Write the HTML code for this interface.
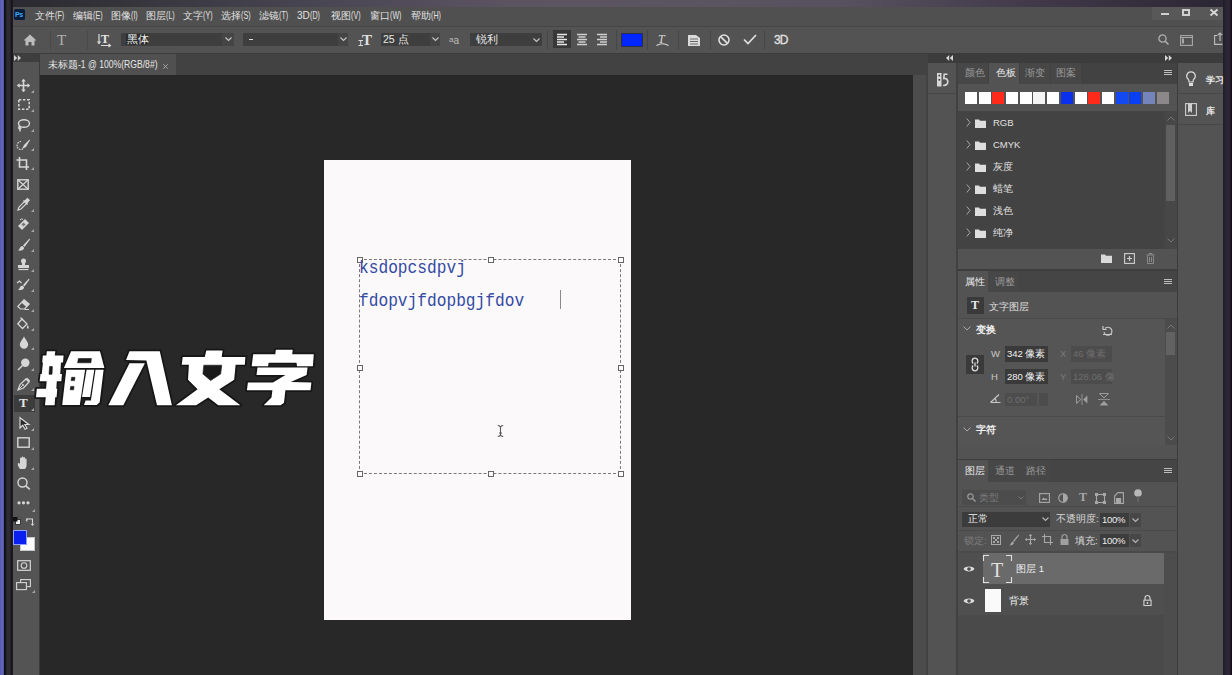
<!DOCTYPE html>
<html><head><meta charset="utf-8">
<style>
*{margin:0;padding:0;box-sizing:border-box}
html,body{width:1232px;height:675px;overflow:hidden;background:#2a2630}
body{position:relative;font-family:"Liberation Sans",sans-serif;color:#e0e0e0}
.a{position:absolute}
.t{position:absolute;white-space:nowrap}
svg{position:absolute;overflow:visible}
</style></head><body>

<div class="a" style="left:0px;top:0px;width:1232px;height:7px;background:linear-gradient(90deg,#2a2830 0%,#333238 8%,#484552 25%,#5d5462 42%,#5a5560 58%,#575160 68%,#403848 85%,#2a2533 100%);"></div>
<div class="a" style="left:0px;top:0px;width:4px;height:675px;background:linear-gradient(90deg,#5558ba,#6467b6 60%,#4f5090);"></div>
<div class="a" style="left:4px;top:0px;width:9px;height:675px;background:linear-gradient(90deg,#040818 0%,#0e121c 12%,#2e2c30 35%,#302b32 65%,#1a1520 80%,#161318 92%,#2a2a2a 100%);"></div>
<div class="a" style="left:1223px;top:0px;width:9px;height:675px;background:linear-gradient(90deg,#201c24,#2a2532 35%,#2e2836 70%,#100810 100%);"></div>
<div class="a" style="left:13px;top:7px;width:1210px;height:19px;background:#505050;"></div>
<div class="a" style="left:14px;top:9px;width:11px;height:11px;background:#0b1d3d;border-radius:1.5px"></div>
<div class="t" style="left:15px;top:9px;font-size:7px;line-height:8.4px;color:#3ea8f8;font-weight:bold;line-height:11px;letter-spacing:-0.3px">Ps</div>
<div class="t" style="left:35px;top:9px;font-size:10px;line-height:13px;color:#e2e2e2">文件<span style="display:inline-block;font-size:10.5px;transform:scaleX(0.68);transform-origin:0 0">(F)</span></div>
<div class="t" style="left:73px;top:9px;font-size:10px;line-height:13px;color:#e2e2e2">编辑<span style="display:inline-block;font-size:10.5px;transform:scaleX(0.68);transform-origin:0 0">(E)</span></div>
<div class="t" style="left:111px;top:9px;font-size:10px;line-height:13px;color:#e2e2e2">图像<span style="display:inline-block;font-size:10.5px;transform:scaleX(0.68);transform-origin:0 0">(I)</span></div>
<div class="t" style="left:146px;top:9px;font-size:10px;line-height:13px;color:#e2e2e2">图层<span style="display:inline-block;font-size:10.5px;transform:scaleX(0.68);transform-origin:0 0">(L)</span></div>
<div class="t" style="left:183px;top:9px;font-size:10px;line-height:13px;color:#e2e2e2">文字<span style="display:inline-block;font-size:10.5px;transform:scaleX(0.68);transform-origin:0 0">(Y)</span></div>
<div class="t" style="left:221px;top:9px;font-size:10px;line-height:13px;color:#e2e2e2">选择<span style="display:inline-block;font-size:10.5px;transform:scaleX(0.68);transform-origin:0 0">(S)</span></div>
<div class="t" style="left:259px;top:9px;font-size:10px;line-height:13px;color:#e2e2e2">滤镜<span style="display:inline-block;font-size:10.5px;transform:scaleX(0.68);transform-origin:0 0">(T)</span></div>
<div class="t" style="left:297px;top:9px;font-size:10px;line-height:13px;color:#e2e2e2">3D<span style="display:inline-block;font-size:10.5px;transform:scaleX(0.68);transform-origin:0 0">(D)</span></div>
<div class="t" style="left:331px;top:9px;font-size:10px;line-height:13px;color:#e2e2e2">视图<span style="display:inline-block;font-size:10.5px;transform:scaleX(0.68);transform-origin:0 0">(V)</span></div>
<div class="t" style="left:370px;top:9px;font-size:10px;line-height:13px;color:#e2e2e2">窗口<span style="display:inline-block;font-size:10.5px;transform:scaleX(0.68);transform-origin:0 0">(W)</span></div>
<div class="t" style="left:411px;top:9px;font-size:10px;line-height:13px;color:#e2e2e2">帮助<span style="display:inline-block;font-size:10.5px;transform:scaleX(0.68);transform-origin:0 0">(H)</span></div>
<div class="a" style="left:1152px;top:7px;width:71px;height:13px;background:#585858;"></div>
<div class="a" style="left:1161px;top:13px;width:8px;height:2px;background:#d0d0d0;"></div>
<div class="a" style="left:1182px;top:9px;width:8px;height:7px;background:transparent;border:2px solid #d0d0d0"></div>
<svg style="left:1210px;top:9px;" width="8" height="7" viewBox="0 0 8 7"><path d="M0.5 0.5L7.5 6.5M7.5 0.5L0.5 6.5" stroke="#d8d8d8" stroke-width="1.8"/></svg>
<div class="a" style="left:13px;top:26px;width:1210px;height:27px;background:#535353;border-top:1px solid #474747"></div>
<div class="a" style="left:13px;top:53px;width:1210px;height:1px;background:#3c3c3c;"></div>
<svg style="left:23px;top:34px;" width="14" height="12" viewBox="0 0 14 12"><path d="M7 0.5L0.5 6.5H2.5V11.5H5.5V8H8.5V11.5H11.5V6.5H13.5Z" fill="#bdbdbd"/></svg>
<div class="a" style="left:50px;top:30px;width:1px;height:20px;background:#4a4a4a;"></div>
<div class="t" style="left:57px;top:32px;font-size:15px;line-height:18.0px;color:#b0b0b0;font-family:'Liberation Serif',serif;line-height:17px">T</div>
<div class="a" style="left:87px;top:30px;width:1px;height:20px;background:#4a4a4a;"></div>
<svg style="left:97px;top:33px;" width="15" height="14" viewBox="0 0 15 14"><path d="M2 1V10M0.5 8.5L2 10.5L3.5 8.5" stroke="#dadada" stroke-width="1.2" fill="none"/><text x="4" y="10" font-family="Liberation Serif" font-weight="bold" font-size="12" fill="#e6e6e6">T</text><path d="M4 12.5H13M11.5 11L13.5 12.5L11.5 14" stroke="#dadada" stroke-width="1.1" fill="none"/></svg>
<div class="a" style="left:121px;top:33px;width:113px;height:13px;background:#454545;"></div>
<div class="a" style="left:121px;top:33px;width:101px;height:13px;background:#3e3e3e;"></div>
<div class="a" style="left:126px;top:34px;width:21px;height:11px;background:#2c2c2c;"></div>
<div class="t" style="left:127px;top:33px;font-size:10.5px;line-height:12.6px;color:#f0f0f0;line-height:13px">黑体</div>
<svg style="left:225px;top:37px;" width="7" height="5" viewBox="0 0 7 5"><path d="M0.5 0.5L3.5 3.5L6.5 0.5" stroke="#c8c8c8" stroke-width="1.1" fill="none"/></svg>
<div class="a" style="left:243px;top:33px;width:105px;height:13px;background:#454545;"></div>
<div class="a" style="left:243px;top:33px;width:95px;height:13px;background:#3e3e3e;"></div>
<div class="a" style="left:249px;top:39px;width:4px;height:1px;background:#e0e0e0;"></div>
<svg style="left:340px;top:37px;" width="7" height="5" viewBox="0 0 7 5"><path d="M0.5 0.5L3.5 3.5L6.5 0.5" stroke="#c8c8c8" stroke-width="1.1" fill="none"/></svg>
<svg style="left:358px;top:32px;" width="15" height="15" viewBox="0 0 15 15"><text x="4" y="13" font-family="Liberation Serif" font-weight="bold" font-size="15" fill="#e0e0e0">T</text><path d="M0.5 8.5H5M0.5 13.5H5M2.7 8.5V13.5" stroke="#dcdcdc" stroke-width="1"/></svg>
<div class="a" style="left:381px;top:33px;width:59px;height:13px;background:#454545;"></div>
<div class="a" style="left:381px;top:33px;width:49px;height:13px;background:#3e3e3e;"></div>
<div class="t" style="left:383px;top:33px;font-size:10.5px;line-height:12.6px;color:#e8e8e8;line-height:13px">25 点</div>
<svg style="left:432px;top:37px;" width="7" height="5" viewBox="0 0 7 5"><path d="M0.5 0.5L3.5 3.5L6.5 0.5" stroke="#c8c8c8" stroke-width="1.1" fill="none"/></svg>
<div class="t" style="left:449px;top:33px;font-size:10px;line-height:12.0px;color:#bdbdbd;line-height:13px"><span style="font-size:8px;vertical-align:2px">a</span>a</div>
<div class="a" style="left:470px;top:33px;width:72px;height:13px;background:#3e3e3e;"></div>
<div class="t" style="left:476px;top:33px;font-size:10.5px;line-height:12.6px;color:#e8e8e8;line-height:13px">锐利</div>
<svg style="left:533px;top:38px;" width="7" height="5" viewBox="0 0 7 5"><path d="M0.5 0.5L3.5 3.5L6.5 0.5" stroke="#c8c8c8" stroke-width="1.1" fill="none"/></svg>
<div class="a" style="left:547px;top:30px;width:1px;height:20px;background:#474747;"></div>
<div class="a" style="left:553px;top:30px;width:18px;height:18px;background:#383838;"></div>
<svg style="left:556px;top:33px;" width="12" height="12" viewBox="0 0 12 12"><path d="M1 1.5H11M1 4H8M1 6.5H11M1 9H8M1 11.5H11" stroke="#e6e6e6" stroke-width="1.5"/></svg>
<svg style="left:576px;top:33px;" width="12" height="12" viewBox="0 0 12 12"><path d="M1 1.5H11M2.5 4H9.5M1 6.5H11M2.5 9H9.5M1 11.5H11" stroke="#d0d0d0" stroke-width="1.5"/></svg>
<svg style="left:596px;top:33px;" width="12" height="12" viewBox="0 0 12 12"><path d="M1 1.5H11M4 4H11M1 6.5H11M4 9H11M1 11.5H11" stroke="#d0d0d0" stroke-width="1.5"/></svg>
<div class="a" style="left:616px;top:30px;width:1px;height:20px;background:#474747;"></div>
<div class="a" style="left:621px;top:33px;width:22px;height:14px;background:#0026ff;border:1px solid #2c2c44"></div>
<div class="a" style="left:647px;top:30px;width:1px;height:20px;background:#474747;"></div>
<svg style="left:656px;top:33px;" width="13" height="14" viewBox="0 0 13 14"><text x="2" y="10" font-family="Liberation Serif" font-style="italic" font-size="12" fill="#d8d8d8">T</text><path d="M0.5 12.5Q6.5 9 12.5 12.5" stroke="#d8d8d8" stroke-width="1.2" fill="none"/></svg>
<div class="a" style="left:678px;top:30px;width:1px;height:20px;background:#474747;"></div>
<svg style="left:687px;top:33px;" width="14" height="14" viewBox="0 0 14 14"><path d="M1 2H9L13 5V13H1Z" fill="#dadada"/><path d="M3 6H11M3 8.5H11M3 11H11" stroke="#6a6a6a" stroke-width="1"/></svg>
<div class="a" style="left:710px;top:30px;width:1px;height:20px;background:#474747;"></div>
<svg style="left:718px;top:34px;" width="12" height="12" viewBox="0 0 12 12"><circle cx="6" cy="6" r="5" stroke="#e0e0e0" stroke-width="1.6" fill="none"/><path d="M2.6 2.6L9.4 9.4" stroke="#e0e0e0" stroke-width="1.6"/></svg>
<svg style="left:743px;top:34px;" width="14" height="11" viewBox="0 0 14 11"><path d="M1 5.5L5 9.5L13 1" stroke="#e0e0e0" stroke-width="1.7" fill="none"/></svg>
<div class="a" style="left:764px;top:30px;width:1px;height:20px;background:#474747;"></div>
<div class="t" style="left:774px;top:33px;font-size:12px;line-height:14.4px;color:#e0e0e0;line-height:14px;letter-spacing:-0.8px;-webkit-text-stroke:0.3px #e0e0e0">3D</div>
<svg style="left:1158px;top:34px;" width="11" height="11" viewBox="0 0 11 11"><circle cx="4.5" cy="4.5" r="3.6" stroke="#b0b0b0" stroke-width="1.3" fill="none"/><path d="M7.2 7.2L10.5 10.5" stroke="#b0b0b0" stroke-width="1.5"/></svg>
<svg style="left:1180px;top:35px;" width="13" height="11" viewBox="0 0 13 11"><rect x="0.6" y="0.6" width="11.8" height="9.8" stroke="#a8a8a8" stroke-width="1.1" fill="none"/><path d="M0.6 2.5H12.4" stroke="#a8a8a8" stroke-width="1"/><rect x="2" y="3.5" width="2" height="5" fill="#a8a8a8"/></svg>
<svg style="left:1214px;top:32px;" width="9" height="13" viewBox="0 0 9 13"><path d="M3.5 3.5H0.6V12.4H8.4" stroke="#bdbdbd" stroke-width="1.1" fill="none"/><path d="M6 9V1M3.8 3.2L6 1L8.2 3.2" stroke="#bdbdbd" stroke-width="1.1" fill="none"/></svg>
<div class="a" style="left:13px;top:54px;width:26px;height:8px;background:#3e3e3e;"></div>
<svg style="left:14px;top:55px;" width="7" height="6" viewBox="0 0 7 6"><path d="M0 0L3.2 3L0 6ZM3.8 0L7 3L3.8 6Z" fill="#d0d0d0"/></svg>
<div class="a" style="left:13px;top:62px;width:26px;height:613px;background:#545454;"></div>
<div class="a" style="left:39px;top:54px;width:1px;height:621px;background:#3a3a3a;"></div>
<div class="a" style="left:40px;top:54px;width:873px;height:21px;background:#424242;"></div>
<div class="a" style="left:40px;top:54px;width:136px;height:21px;background:#505050;"></div>
<div class="t" style="left:48px;top:58px;font-size:10px;line-height:13px;color:#e6e6e6">未标题<span style="display:inline-block;font-size:10.5px;transform:scaleX(0.82);transform-origin:0 0">-1 @ 100%(RGB/8#)</span></div>
<svg style="left:163px;top:64px;" width="5" height="5" viewBox="0 0 5 5"><path d="M0.3 0.3L4.7 4.7M4.7 0.3L0.3 4.7" stroke="#a8a8a8" stroke-width="1"/></svg>
<div class="a" style="left:40px;top:75px;width:873px;height:600px;background:#282828;"></div>
<div class="a" style="left:324px;top:160px;width:307px;height:460px;background:#fbf9fa;"></div>
<svg style="left:17px;top:79px;" width="13" height="13" viewBox="0 0 13 13"><path d="M6.5 0.5V12.5M0.5 6.5H12.5" stroke="#d6d6d6" stroke-width="1.6"/><path d="M6.5 0L4.2 2.6H8.8ZM6.5 13L4.2 10.4H8.8ZM0 6.5L2.6 4.2V8.8ZM13 6.5L10.4 4.2V8.8Z" fill="#d6d6d6"/></svg>
<svg style="left:31px;top:90px;" width="3" height="3" viewBox="0 0 3 3"><path d="M3 0V3H0Z" fill="#a8a8a8"/></svg>
<svg style="left:18px;top:99px;" width="12" height="11" viewBox="0 0 12 11"><rect x="0.8" y="0.8" width="10.4" height="9.4" stroke="#d6d6d6" stroke-width="1.5" fill="none" stroke-dasharray="2.5 1.6"/></svg>
<svg style="left:31px;top:109px;" width="3" height="3" viewBox="0 0 3 3"><path d="M3 0V3H0Z" fill="#a8a8a8"/></svg>
<svg style="left:17px;top:119px;" width="13" height="13" viewBox="0 0 13 13"><ellipse cx="7" cy="4.5" rx="5.5" ry="3.8" stroke="#d6d6d6" stroke-width="1.4" fill="none"/><path d="M2.5 7Q1 9 3 10.5V12.5" stroke="#d6d6d6" stroke-width="1.4" fill="none"/><circle cx="3" cy="9.2" r="1.3" fill="#d6d6d6"/></svg>
<svg style="left:31px;top:129px;" width="3" height="3" viewBox="0 0 3 3"><path d="M3 0V3H0Z" fill="#a8a8a8"/></svg>
<svg style="left:17px;top:139px;" width="13" height="11" viewBox="0 0 13 11"><path d="M4 2.5A4 4 0 1 0 6 10" stroke="#d6d6d6" stroke-width="1.2" fill="none" stroke-dasharray="1.5 1"/><path d="M12.5 0.5L7 6L5 10L9 8L12.8 1.2Z" fill="#d6d6d6"/></svg>
<svg style="left:31px;top:148px;" width="3" height="3" viewBox="0 0 3 3"><path d="M3 0V3H0Z" fill="#a8a8a8"/></svg>
<svg style="left:16px;top:157px;" width="14" height="13" viewBox="0 0 14 13"><path d="M3.5 0V10H13M0.5 3H10.5V13" stroke="#d6d6d6" stroke-width="1.6" fill="none"/></svg>
<svg style="left:31px;top:167px;" width="3" height="3" viewBox="0 0 3 3"><path d="M3 0V3H0Z" fill="#a8a8a8"/></svg>
<svg style="left:17px;top:179px;" width="12" height="11" viewBox="0 0 12 11"><rect x="0.8" y="0.8" width="10.4" height="9.4" stroke="#d6d6d6" stroke-width="1.4" fill="none"/><path d="M1 1L11 10M11 1L1 10" stroke="#d6d6d6" stroke-width="1.2"/></svg>
<svg style="left:17px;top:198px;" width="13" height="13" viewBox="0 0 13 13"><path d="M1 12L2 9L8 3L10 5L4 11Z" stroke="#d6d6d6" stroke-width="1.2" fill="none"/><path d="M7.5 2.5L10.5 -0.2L13 2.3L10.3 5.3Z" fill="#d6d6d6"/><path d="M6.5 2.5L10.5 6.5" stroke="#d6d6d6" stroke-width="1.4"/></svg>
<svg style="left:31px;top:209px;" width="3" height="3" viewBox="0 0 3 3"><path d="M3 0V3H0Z" fill="#a8a8a8"/></svg>
<svg style="left:17px;top:218px;" width="13" height="12" viewBox="0 0 13 12"><path d="M1 8L8 1L12 5L5 12Z" fill="#d6d6d6"/><rect x="5" y="5" width="3" height="3" fill="#7a7a7a" transform="rotate(45 6.5 6.5)"/><path d="M3 2A2 2 0 0 1 6 1.5" stroke="#d6d6d6" stroke-width="1" fill="none"/></svg>
<svg style="left:31px;top:229px;" width="3" height="3" viewBox="0 0 3 3"><path d="M3 0V3H0Z" fill="#a8a8a8"/></svg>
<svg style="left:17px;top:238px;" width="13" height="13" viewBox="0 0 13 13"><path d="M12.5 0.5L6 7.5L7.5 9L13 1.5Z" fill="#d6d6d6"/><path d="M5.5 8C3 8 3 11 1 12.5C4 13 7.5 12 7 9.5Z" fill="#d6d6d6"/></svg>
<svg style="left:31px;top:249px;" width="3" height="3" viewBox="0 0 3 3"><path d="M3 0V3H0Z" fill="#a8a8a8"/></svg>
<svg style="left:17px;top:258px;" width="13" height="13" viewBox="0 0 13 13"><circle cx="6.5" cy="3" r="2.5" fill="#d6d6d6"/><path d="M5 5H8V7H12V10H1V7H5Z" fill="#d6d6d6"/><path d="M1.5 11.5H11.5" stroke="#d6d6d6" stroke-width="1.2"/></svg>
<svg style="left:31px;top:269px;" width="3" height="3" viewBox="0 0 3 3"><path d="M3 0V3H0Z" fill="#a8a8a8"/></svg>
<svg style="left:16px;top:278px;" width="14" height="13" viewBox="0 0 14 13"><path d="M13 0.5L7 7L8.5 8.5L13.5 1.5Z" fill="#d6d6d6"/><path d="M6.5 7.5C4 7.5 4 10.5 2 12C5 12.5 8.5 11.5 8 9Z" fill="#d6d6d6"/><path d="M1 5L3.5 3L5.5 5" stroke="#d6d6d6" stroke-width="1.2" fill="none"/></svg>
<svg style="left:31px;top:289px;" width="3" height="3" viewBox="0 0 3 3"><path d="M3 0V3H0Z" fill="#a8a8a8"/></svg>
<svg style="left:17px;top:299px;" width="13" height="12" viewBox="0 0 13 12"><path d="M7 0.8L12.2 5L7.5 10H3.5L0.8 7.5Z" stroke="#d6d6d6" stroke-width="1.2" fill="none"/><path d="M7 0.8L12.2 5L9.5 8L4.5 3.8Z" fill="#d6d6d6"/><path d="M7.5 10.5H12" stroke="#d6d6d6" stroke-width="1"/></svg>
<svg style="left:31px;top:309px;" width="3" height="3" viewBox="0 0 3 3"><path d="M3 0V3H0Z" fill="#a8a8a8"/></svg>
<svg style="left:17px;top:317px;" width="13" height="13" viewBox="0 0 13 13"><path d="M5 2L10 7L5.5 11.5L0.8 6.8Z" stroke="#d6d6d6" stroke-width="1.3" fill="none"/><path d="M3.5 0.5L6 3" stroke="#d6d6d6" stroke-width="1.3"/><path d="M10.5 8C11.5 9.5 12.5 10.5 11 12C9.5 11 10 9.5 10.5 8Z" fill="#d6d6d6"/></svg>
<svg style="left:31px;top:328px;" width="3" height="3" viewBox="0 0 3 3"><path d="M3 0V3H0Z" fill="#a8a8a8"/></svg>
<svg style="left:19px;top:336px;" width="10" height="13" viewBox="0 0 10 13"><path d="M5 0.5C3 4 0.8 6.5 0.8 8.5A4.2 4.2 0 0 0 9.2 8.5C9.2 6.5 7 4 5 0.5Z" fill="#d6d6d6"/></svg>
<svg style="left:31px;top:347px;" width="3" height="3" viewBox="0 0 3 3"><path d="M3 0V3H0Z" fill="#a8a8a8"/></svg>
<svg style="left:17px;top:358px;" width="13" height="13" viewBox="0 0 13 13"><circle cx="8.3" cy="4.7" r="4.2" fill="#d6d6d6"/><path d="M5.5 7.5L1 12" stroke="#d6d6d6" stroke-width="1.5"/></svg>
<svg style="left:31px;top:368px;" width="3" height="3" viewBox="0 0 3 3"><path d="M3 0V3H0Z" fill="#a8a8a8"/></svg>
<svg style="left:17px;top:378px;" width="13" height="13" viewBox="0 0 13 13"><path d="M9 1L12 4L6.5 10L1 12L3 6.5Z" stroke="#d6d6d6" stroke-width="1.3" fill="none"/><path d="M1 12L5.5 7.5" stroke="#d6d6d6" stroke-width="1"/><circle cx="6" cy="7" r="1" fill="#d6d6d6"/><path d="M9.5 0.5L12.5 3.5" stroke="#d6d6d6" stroke-width="2"/></svg>
<svg style="left:31px;top:388px;" width="3" height="3" viewBox="0 0 3 3"><path d="M3 0V3H0Z" fill="#a8a8a8"/></svg>
<div class="a" style="left:14px;top:395px;width:21px;height:17px;background:#3c3c3c;"></div>
<div class="t" style="left:19px;top:395px;font-size:13px;line-height:15.6px;color:#e4e4e4;font-family:'Liberation Serif',serif;font-weight:bold;line-height:16px">T</div>
<svg style="left:31px;top:408px;" width="3" height="3" viewBox="0 0 3 3"><path d="M3 0V3H0Z" fill="#a8a8a8"/></svg>
<svg style="left:19px;top:417px;" width="11" height="13" viewBox="0 0 11 13"><path d="M1 0.8L1 11L3.8 8.3L6 12.3L8 11.3L5.8 7.5H9.8Z" fill="#2a2a2a" stroke="#d6d6d6" stroke-width="1.2"/></svg>
<svg style="left:31px;top:428px;" width="3" height="3" viewBox="0 0 3 3"><path d="M3 0V3H0Z" fill="#a8a8a8"/></svg>
<svg style="left:17px;top:437px;" width="13" height="11" viewBox="0 0 13 11"><rect x="0.8" y="0.8" width="11.4" height="9.4" stroke="#d6d6d6" stroke-width="1.4" fill="none"/></svg>
<svg style="left:31px;top:447px;" width="3" height="3" viewBox="0 0 3 3"><path d="M3 0V3H0Z" fill="#a8a8a8"/></svg>
<svg style="left:17px;top:456px;" width="13" height="14" viewBox="0 0 13 14"><path d="M3 13C1.5 11 0.5 9 0.8 7.5C1.3 6.5 2.5 7 3 8V2.5C3 1.3 4.6 1.3 4.6 2.5V6V1.5C4.6 0.3 6.3 0.3 6.3 1.5V6V2C6.3 0.8 8 0.8 8 2V6.3V3.3C8 2.2 9.6 2.2 9.6 3.3V9C9.6 11 8.5 13 7.5 13Z" fill="#d6d6d6"/></svg>
<svg style="left:31px;top:467px;" width="3" height="3" viewBox="0 0 3 3"><path d="M3 0V3H0Z" fill="#a8a8a8"/></svg>
<svg style="left:17px;top:477px;" width="14" height="13" viewBox="0 0 14 13"><circle cx="5.5" cy="5.5" r="4.5" stroke="#d6d6d6" stroke-width="1.4" fill="none"/><path d="M8.8 8.8L12.8 12.3" stroke="#d6d6d6" stroke-width="1.6"/></svg>
<svg style="left:17px;top:501px;" width="13" height="4" viewBox="0 0 13 4"><circle cx="2" cy="1.8" r="1.6" fill="#d6d6d6"/><circle cx="6.5" cy="1.8" r="1.6" fill="#d6d6d6"/><circle cx="11" cy="1.8" r="1.6" fill="#d6d6d6"/></svg>
<svg style="left:32px;top:509px;" width="3" height="3" viewBox="0 0 3 3"><path d="M3 0V3H0Z" fill="#a8a8a8"/></svg>
<svg style="left:13px;top:517px;" width="8" height="8" viewBox="0 0 8 8"><rect x="2.5" y="2.5" width="5" height="5" fill="#f0f0f0" stroke="#222" stroke-width="0.8"/><rect x="0" y="0" width="4.5" height="4.5" fill="#111"/></svg>
<svg style="left:26px;top:518px;" width="8" height="8" viewBox="0 0 8 8"><path d="M0.8 3.5V1H6.5V7" stroke="#d6d6d6" stroke-width="1.1" fill="none"/><path d="M0 2.5L1.5 0.3M5.2 5.8L6.5 7.5L7.8 5.8" stroke="#d6d6d6" stroke-width="1" fill="none"/></svg>
<div class="a" style="left:20px;top:537px;width:15px;height:14px;background:#fbfbfb;border:1px solid #c8c8c8"></div>
<div class="a" style="left:13px;top:530px;width:14px;height:15px;background:#0a20f0;border:1px solid #8ea0ff"></div>
<svg style="left:17px;top:560px;" width="14" height="11" viewBox="0 0 14 11"><rect x="0.7" y="0.7" width="12.6" height="9.6" stroke="#d6d6d6" stroke-width="1.2" fill="none"/><circle cx="7" cy="5.5" r="2.8" stroke="#d6d6d6" stroke-width="1.1" fill="none"/></svg>
<svg style="left:16px;top:579px;" width="15" height="12" viewBox="0 0 15 12"><rect x="4.6" y="0.6" width="9.8" height="7" stroke="#d6d6d6" stroke-width="1.1" fill="#545454"/><rect x="0.6" y="3.6" width="9.8" height="7" stroke="#d6d6d6" stroke-width="1.1" fill="#545454"/></svg>
<svg style="left:32px;top:590px;" width="3" height="3" viewBox="0 0 3 3"><path d="M3 0V3H0Z" fill="#a8a8a8"/></svg>
<div class="a" style="left:359px;top:259px;width:262px;height:215px;border:1px dashed #7a7a7a"></div>
<div class="a" style="left:357px;top:257px;width:6px;height:6px;background:#fcfcfc;border:1px solid #666"></div>
<div class="a" style="left:357px;top:365px;width:6px;height:6px;background:#fcfcfc;border:1px solid #666"></div>
<div class="a" style="left:357px;top:471px;width:6px;height:6px;background:#fcfcfc;border:1px solid #666"></div>
<div class="a" style="left:488px;top:257px;width:6px;height:6px;background:#fcfcfc;border:1px solid #666"></div>
<div class="a" style="left:488px;top:471px;width:6px;height:6px;background:#fcfcfc;border:1px solid #666"></div>
<div class="a" style="left:618px;top:257px;width:6px;height:6px;background:#fcfcfc;border:1px solid #666"></div>
<div class="a" style="left:618px;top:365px;width:6px;height:6px;background:#fcfcfc;border:1px solid #666"></div>
<div class="a" style="left:618px;top:471px;width:6px;height:6px;background:#fcfcfc;border:1px solid #666"></div>
<div class="t" style="left:359px;top:258px;font-family:'Liberation Mono',monospace;font-size:17.6px;line-height:20px;color:#3349a4;transform:scaleX(0.92);transform-origin:0 0">ksdopcsdpvj</div>
<div class="t" style="left:359px;top:291px;font-family:'Liberation Mono',monospace;font-size:17.6px;line-height:20px;color:#3349a4;transform:scaleX(0.92);transform-origin:0 0">fdopvjfdopbgjfdov</div>
<div class="a" style="left:560px;top:290px;width:1px;height:19px;background:#8a8a8a;"></div>
<svg style="left:497px;top:425px;" width="7" height="12" viewBox="0 0 7 12"><path d="M0.8 0.5Q3.5 0.8 3.5 2.5Q3.5 0.8 6.2 0.5M3.5 2.5V9.5M0.8 11.5Q3.5 11.2 3.5 9.5Q3.5 11.2 6.2 11.5M2 8H5" stroke="#5a5a5a" stroke-width="1.1" fill="none"/></svg>
<svg class="a" style="left:0;top:0" width="1232" height="675" viewBox="0 0 1232 675"><polygon points="46.8,351.3 55.3,351.3 54.8,355.6 63.6,355.6 63.0,362.4 42.2,362.4 42.8,355.6 46.4,355.6" fill="#161616" stroke="#161616" stroke-width="3.6" stroke-linejoin="round"/><polygon points="43.0,362.0 61.0,362.0 60.2,374.5 41.7,374.5" fill="#161616" stroke="#161616" stroke-width="3.6" stroke-linejoin="round"/><polygon points="40.5,374.0 62.0,374.0 61.3,381.2 39.7,381.2" fill="#161616" stroke="#161616" stroke-width="3.6" stroke-linejoin="round"/><polygon points="46.7,381.0 56.8,381.0 56.3,389.0 46.0,389.0" fill="#161616" stroke="#161616" stroke-width="3.6" stroke-linejoin="round"/><polygon points="36.8,388.7 57.3,388.7 56.6,397.2 36.0,397.2" fill="#161616" stroke="#161616" stroke-width="3.6" stroke-linejoin="round"/><polygon points="45.8,397.0 55.2,397.0 54.6,405.3 45.0,405.3" fill="#161616" stroke="#161616" stroke-width="3.6" stroke-linejoin="round"/><polygon points="71.1,351.3 100.0,351.3 104.4,368.1 63.9,368.1" fill="#161616" stroke="#161616" stroke-width="3.6" stroke-linejoin="round"/><polygon points="66.3,369.8 85.1,369.8 79.8,404.9 62.2,404.9" fill="#161616" stroke="#161616" stroke-width="3.6" stroke-linejoin="round"/><polygon points="86.6,369.8 94.3,369.8 90.1,397.0 82.0,397.0" fill="#161616" stroke="#161616" stroke-width="3.6" stroke-linejoin="round"/><polygon points="95.5,369.8 103.6,369.8 99.7,402.3 96.7,404.9 84.0,404.9 85.6,400.4 90.9,400.4" fill="#161616" stroke="#161616" stroke-width="3.6" stroke-linejoin="round"/><polygon points="129.5,351.3 159.8,351.3 171.9,405.2 157.0,405.2 146.4,360.4 126.0,359.9" fill="#161616" stroke="#161616" stroke-width="3.6" stroke-linejoin="round"/><polygon points="129.5,363.3 144.9,363.3 123.3,405.2 108.3,405.2" fill="#161616" stroke="#161616" stroke-width="3.6" stroke-linejoin="round"/><polygon points="206.3,350.6 222.6,350.6 221.7,357.0 245.4,357.0 244.8,364.7 235.6,364.7 234.2,379.7 219.3,389.3 240.4,405.2 218.3,405.2 208.2,397.5 196.1,405.2 175.9,405.2 197.6,389.3 188.0,379.7 188.9,364.7 181.7,364.7 182.7,357.0 204.8,357.0" fill="#161616" stroke="#161616" stroke-width="3.6" stroke-linejoin="round"/><polygon points="275.8,349.8 292.7,349.8 292.2,354.2 313.8,354.2 312.9,366.2 297.0,366.2 296.5,362.8 268.6,362.8 268.1,366.2 251.7,366.2 253.2,354.2 275.3,354.2" fill="#161616" stroke="#161616" stroke-width="3.6" stroke-linejoin="round"/><polygon points="257.5,367.6 307.6,367.6 306.6,374.9 290.7,382.1 311.4,382.6 310.5,390.3 285.4,390.3 284.0,402.8 280.6,405.2 263.7,405.2 271.5,397.5 272.4,390.3 246.9,390.3 247.9,382.6 272.9,382.6 285.4,374.9 256.5,374.9" fill="#161616" stroke="#161616" stroke-width="3.6" stroke-linejoin="round"/><polygon points="46.8,351.3 55.3,351.3 54.8,355.6 63.6,355.6 63.0,362.4 42.2,362.4 42.8,355.6 46.4,355.6" fill="#ffffff"/><polygon points="43.0,362.0 61.0,362.0 60.2,374.5 41.7,374.5" fill="#ffffff"/><polygon points="40.5,374.0 62.0,374.0 61.3,381.2 39.7,381.2" fill="#ffffff"/><polygon points="46.7,381.0 56.8,381.0 56.3,389.0 46.0,389.0" fill="#ffffff"/><polygon points="36.8,388.7 57.3,388.7 56.6,397.2 36.0,397.2" fill="#ffffff"/><polygon points="45.8,397.0 55.2,397.0 54.6,405.3 45.0,405.3" fill="#ffffff"/><polygon points="71.1,351.3 100.0,351.3 104.4,368.1 63.9,368.1" fill="#ffffff"/><polygon points="66.3,369.8 85.1,369.8 79.8,404.9 62.2,404.9" fill="#ffffff"/><polygon points="86.6,369.8 94.3,369.8 90.1,397.0 82.0,397.0" fill="#ffffff"/><polygon points="95.5,369.8 103.6,369.8 99.7,402.3 96.7,404.9 84.0,404.9 85.6,400.4 90.9,400.4" fill="#ffffff"/><polygon points="129.5,351.3 159.8,351.3 171.9,405.2 157.0,405.2 146.4,360.4 126.0,359.9" fill="#ffffff"/><polygon points="129.5,363.3 144.9,363.3 123.3,405.2 108.3,405.2" fill="#ffffff"/><polygon points="206.3,350.6 222.6,350.6 221.7,357.0 245.4,357.0 244.8,364.7 235.6,364.7 234.2,379.7 219.3,389.3 240.4,405.2 218.3,405.2 208.2,397.5 196.1,405.2 175.9,405.2 197.6,389.3 188.0,379.7 188.9,364.7 181.7,364.7 182.7,357.0 204.8,357.0" fill="#ffffff"/><polygon points="275.8,349.8 292.7,349.8 292.2,354.2 313.8,354.2 312.9,366.2 297.0,366.2 296.5,362.8 268.6,362.8 268.1,366.2 251.7,366.2 253.2,354.2 275.3,354.2" fill="#ffffff"/><polygon points="257.5,367.6 307.6,367.6 306.6,374.9 290.7,382.1 311.4,382.6 310.5,390.3 285.4,390.3 284.0,402.8 280.6,405.2 263.7,405.2 271.5,397.5 272.4,390.3 246.9,390.3 247.9,382.6 272.9,382.6 285.4,374.9 256.5,374.9" fill="#ffffff"/><polygon points="49.6,366.5 52.4,366.5 52.0,374.3 49.0,374.3" fill="#1a1a1a" stroke="#1a1a1a" stroke-width="0.6"/><polygon points="78.4,358.5 91.4,358.5 90.9,362.8 77.6,362.8" fill="#1a1a1a" stroke="#1a1a1a" stroke-width="0.6"/><polygon points="71.6,377.3 75.0,377.3 74.5,380.6 71.1,380.6" fill="#1a1a1a" stroke="#1a1a1a" stroke-width="0.6"/><polygon points="70.7,386.4 74.0,386.4 73.6,389.8 70.2,389.8" fill="#1a1a1a" stroke="#1a1a1a" stroke-width="0.6"/><polygon points="203.8,365.2 221.7,365.2 220.7,373.9 210.6,380.6 202.9,373.9" fill="#1a1a1a" stroke="#1a1a1a" stroke-width="0.6"/></svg>
<div class="a" style="left:913px;top:54px;width:14px;height:21px;background:#424242;"></div>
<div class="a" style="left:913px;top:75px;width:14px;height:600px;background:#4c4c4c;"></div>
<div class="a" style="left:926px;top:54px;width:2px;height:621px;background:#424242;"></div>
<div class="a" style="left:928px;top:53px;width:295px;height:10px;background:#3c3c3c;"></div>
<svg style="left:946px;top:55px;" width="7" height="6" viewBox="0 0 7 6"><path d="M3.2 0L0 3L3.2 6ZM7 0L3.8 3L7 6Z" fill="#d8d8d8"/></svg>
<svg style="left:1165px;top:55px;" width="7" height="6" viewBox="0 0 7 6"><path d="M0 0L3.2 3L0 6ZM3.8 0L7 3L3.8 6Z" fill="#d8d8d8"/></svg>
<div class="a" style="left:928px;top:63px;width:28px;height:612px;background:#535353;"></div>
<div class="a" style="left:928px;top:93px;width:28px;height:1px;background:#474747;"></div>
<svg style="left:937px;top:73px;" width="12" height="14" viewBox="0 0 12 14"><rect x="0" y="0" width="4.5" height="13.5" fill="#d8d8d8"/><rect x="1.5" y="1.8" width="1.6" height="1.6" fill="#333"/><rect x="1.5" y="6" width="1.6" height="1.6" fill="#333"/><path d="M6.5 1.2H10.5M7.2 1.2L6.8 5.5C9.5 5 11 7 10.8 9C10.6 11.5 8.5 12.8 6.2 12.2" stroke="#d8d8d8" stroke-width="1.6" fill="none"/></svg>
<div class="a" style="left:956px;top:63px;width:2px;height:612px;background:#414141;"></div>
<div class="a" style="left:958px;top:63px;width:219px;height:612px;background:#535353;"></div>
<div class="a" style="left:1177px;top:63px;width:1px;height:612px;background:#3c3c3c;"></div>
<div class="a" style="left:1178px;top:63px;width:45px;height:612px;background:#535353;"></div>
<div class="a" style="left:1178px;top:93px;width:45px;height:1px;background:#474747;"></div>
<div class="a" style="left:1178px;top:124px;width:45px;height:1px;background:#474747;"></div>
<svg style="left:1186px;top:71px;" width="10" height="16" viewBox="0 0 10 16"><path d="M5 0.8A4.2 4.2 0 0 0 2.2 8.2C3 9 3 10 3 11H7C7 10 7 9 7.8 8.2A4.2 4.2 0 0 0 5 0.8Z" stroke="#dcdcdc" stroke-width="1.2" fill="none"/><rect x="3" y="12" width="4" height="3" fill="#dcdcdc"/></svg>
<div class="t" style="left:1206px;top:75px;font-size:9px;line-height:10.8px;color:#e6e6e6;line-height:11px;font-weight:bold">学习</div>
<svg style="left:1185px;top:103px;" width="12" height="13" viewBox="0 0 12 13"><rect x="0.6" y="0.6" width="10.8" height="11.8" stroke="#cfcfcf" stroke-width="1.1" fill="none"/><path d="M3 1V10L5 8L7 10V1" fill="#cfcfcf"/></svg>
<div class="t" style="left:1206px;top:106px;font-size:9px;line-height:10.8px;color:#e6e6e6;line-height:11px;font-weight:bold">库</div>
<div class="a" style="left:958px;top:63px;width:219px;height:21px;background:#424242;"></div>
<div class="a" style="left:958px;top:63px;width:30px;height:21px;background:#474747;"></div>
<div class="a" style="left:989px;top:63px;width:30px;height:21px;background:#535353;"></div>
<div class="a" style="left:1020px;top:63px;width:30px;height:21px;background:#474747;"></div>
<div class="a" style="left:1051px;top:63px;width:30px;height:21px;background:#474747;"></div>
<div class="t" style="left:965px;top:67px;font-size:9.5px;line-height:11.4px;color:#9a9a9a;line-height:11px">颜色</div>
<div class="t" style="left:996px;top:67px;font-size:9.5px;line-height:11.4px;color:#ececec;line-height:11px">色板</div>
<div class="t" style="left:1025px;top:67px;font-size:9.5px;line-height:11.4px;color:#9a9a9a;line-height:11px">渐变</div>
<div class="t" style="left:1056px;top:67px;font-size:9.5px;line-height:11.4px;color:#9a9a9a;line-height:11px">图案</div>
<div class="a" style="left:1164px;top:70px;width:8px;height:1px;background:#bdbdbd;"></div>
<div class="a" style="left:1164px;top:72px;width:8px;height:1px;background:#bdbdbd;"></div>
<div class="a" style="left:1164px;top:74px;width:8px;height:1px;background:#bdbdbd;"></div>
<div class="a" style="left:965px;top:92px;width:12px;height:12px;background:#ffffff;"></div>
<div class="a" style="left:979px;top:92px;width:12px;height:12px;background:#fdfdfd;"></div>
<div class="a" style="left:992px;top:92px;width:12px;height:12px;background:#ff2a1a;"></div>
<div class="a" style="left:1006px;top:92px;width:12px;height:12px;background:#ffffff;"></div>
<div class="a" style="left:1020px;top:92px;width:12px;height:12px;background:#ffffff;"></div>
<div class="a" style="left:1033px;top:92px;width:12px;height:12px;background:#f4f4f4;"></div>
<div class="a" style="left:1047px;top:92px;width:12px;height:12px;background:#ffffff;"></div>
<div class="a" style="left:1061px;top:92px;width:12px;height:12px;background:#0a30ee;"></div>
<div class="a" style="left:1075px;top:92px;width:12px;height:12px;background:#ffffff;"></div>
<div class="a" style="left:1088px;top:92px;width:12px;height:12px;background:#ff2a1a;"></div>
<div class="a" style="left:1102px;top:92px;width:12px;height:12px;background:#ffffff;"></div>
<div class="a" style="left:1116px;top:92px;width:12px;height:12px;background:#1448f0;"></div>
<div class="a" style="left:1129px;top:92px;width:12px;height:12px;background:#0a40f5;"></div>
<div class="a" style="left:1143px;top:92px;width:12px;height:12px;background:#7585bb;"></div>
<div class="a" style="left:1157px;top:92px;width:12px;height:12px;background:#8c8789;"></div>
<div class="a" style="left:958px;top:111px;width:207px;height:138px;background:#434343;"></div>
<svg style="left:966px;top:118px;" width="5" height="9" viewBox="0 0 5 9"><path d="M0.8 0.5L4 4.5L0.8 8.5" stroke="#a8a8a8" stroke-width="1" fill="none"/></svg>
<svg style="left:975px;top:119px;" width="11" height="9" viewBox="0 0 11 9"><path d="M0 0.5H4L5 1.8H11V9H0Z" fill="#dedede"/></svg>
<div class="t" style="left:993px;top:117px;font-size:9.5px;line-height:11.4px;color:#e0e0e0;line-height:11px">RGB</div>
<svg style="left:966px;top:140px;" width="5" height="9" viewBox="0 0 5 9"><path d="M0.8 0.5L4 4.5L0.8 8.5" stroke="#a8a8a8" stroke-width="1" fill="none"/></svg>
<svg style="left:975px;top:141px;" width="11" height="9" viewBox="0 0 11 9"><path d="M0 0.5H4L5 1.8H11V9H0Z" fill="#dedede"/></svg>
<div class="t" style="left:993px;top:139px;font-size:9.5px;line-height:11.4px;color:#e0e0e0;line-height:11px">CMYK</div>
<svg style="left:966px;top:162px;" width="5" height="9" viewBox="0 0 5 9"><path d="M0.8 0.5L4 4.5L0.8 8.5" stroke="#a8a8a8" stroke-width="1" fill="none"/></svg>
<svg style="left:975px;top:163px;" width="11" height="9" viewBox="0 0 11 9"><path d="M0 0.5H4L5 1.8H11V9H0Z" fill="#dedede"/></svg>
<div class="t" style="left:993px;top:161px;font-size:9.5px;line-height:11.4px;color:#e0e0e0;line-height:11px">灰度</div>
<svg style="left:966px;top:184px;" width="5" height="9" viewBox="0 0 5 9"><path d="M0.8 0.5L4 4.5L0.8 8.5" stroke="#a8a8a8" stroke-width="1" fill="none"/></svg>
<svg style="left:975px;top:185px;" width="11" height="9" viewBox="0 0 11 9"><path d="M0 0.5H4L5 1.8H11V9H0Z" fill="#dedede"/></svg>
<div class="t" style="left:993px;top:183px;font-size:9.5px;line-height:11.4px;color:#e0e0e0;line-height:11px">蜡笔</div>
<svg style="left:966px;top:206px;" width="5" height="9" viewBox="0 0 5 9"><path d="M0.8 0.5L4 4.5L0.8 8.5" stroke="#a8a8a8" stroke-width="1" fill="none"/></svg>
<svg style="left:975px;top:207px;" width="11" height="9" viewBox="0 0 11 9"><path d="M0 0.5H4L5 1.8H11V9H0Z" fill="#dedede"/></svg>
<div class="t" style="left:993px;top:205px;font-size:9.5px;line-height:11.4px;color:#e0e0e0;line-height:11px">浅色</div>
<svg style="left:966px;top:228px;" width="5" height="9" viewBox="0 0 5 9"><path d="M0.8 0.5L4 4.5L0.8 8.5" stroke="#a8a8a8" stroke-width="1" fill="none"/></svg>
<svg style="left:975px;top:229px;" width="11" height="9" viewBox="0 0 11 9"><path d="M0 0.5H4L5 1.8H11V9H0Z" fill="#dedede"/></svg>
<div class="t" style="left:993px;top:227px;font-size:9.5px;line-height:11.4px;color:#e0e0e0;line-height:11px">纯净</div>
<div class="a" style="left:1165px;top:111px;width:12px;height:138px;background:#474747;"></div>
<svg style="left:1167px;top:116px;" width="8" height="5" viewBox="0 0 8 5"><path d="M0.5 4.5L4 1L7.5 4.5" stroke="#777" stroke-width="1" fill="none"/></svg>
<div class="a" style="left:1166px;top:125px;width:9px;height:76px;background:#606060;"></div>
<svg style="left:1167px;top:238px;" width="8" height="5" viewBox="0 0 8 5"><path d="M0.5 0.5L4 4L7.5 0.5" stroke="#777" stroke-width="1" fill="none"/></svg>
<div class="a" style="left:958px;top:249px;width:219px;height:20px;background:#535353;"></div>
<svg style="left:1101px;top:254px;" width="11" height="9" viewBox="0 0 11 9"><path d="M0 0.5H4L5 1.8H11V9H0Z" fill="#dadada"/></svg>
<svg style="left:1124px;top:253px;" width="11" height="11" viewBox="0 0 11 11"><rect x="0.6" y="0.6" width="9.8" height="9.8" stroke="#cfcfcf" stroke-width="1.1" fill="none"/><path d="M3 5.5H8M5.5 3V8" stroke="#cfcfcf" stroke-width="1.2"/></svg>
<svg style="left:1146px;top:253px;" width="9" height="11" viewBox="0 0 9 11"><path d="M0.5 2H8.5M3 2V0.5H6V2M1.5 2.5V10.5H7.5V2.5M3.5 4V9M5.5 4V9" stroke="#8a8a8a" stroke-width="1" fill="none"/></svg>
<div class="a" style="left:958px;top:269px;width:219px;height:2px;background:#3e3e3e;"></div>
<div class="a" style="left:958px;top:271px;width:219px;height:21px;background:#454545;"></div>
<div class="a" style="left:988px;top:271px;width:31px;height:21px;background:#474747;"></div>
<div class="a" style="left:958px;top:271px;width:30px;height:21px;background:#535353;"></div>
<div class="t" style="left:965px;top:276px;font-size:9.5px;line-height:11.4px;color:#ececec;line-height:11px">属性</div>
<div class="t" style="left:995px;top:276px;font-size:9.5px;line-height:11.4px;color:#9a9a9a;line-height:11px">调整</div>
<div class="a" style="left:1164px;top:279px;width:8px;height:1px;background:#bdbdbd;"></div>
<div class="a" style="left:1164px;top:281px;width:8px;height:1px;background:#bdbdbd;"></div>
<div class="a" style="left:1164px;top:283px;width:8px;height:1px;background:#bdbdbd;"></div>
<div class="a" style="left:967px;top:297px;width:17px;height:17px;background:#3a3a3a;"></div>
<div class="t" style="left:971px;top:298px;font-size:12px;line-height:14.4px;color:#eaeaea;font-family:'Liberation Serif',serif;font-weight:bold;line-height:15px">T</div>
<div class="t" style="left:989px;top:301px;font-size:9.5px;line-height:11.4px;color:#e0e0e0;line-height:11px">文字图层</div>
<div class="a" style="left:958px;top:318px;width:219px;height:1px;background:#4a4a4a;"></div>
<div class="a" style="left:958px;top:319px;width:207px;height:126px;background:#555555;"></div>
<svg style="left:963px;top:326px;" width="8" height="5" viewBox="0 0 8 5"><path d="M0.5 0.5L4 4L7.5 0.5" stroke="#a8a8a8" stroke-width="1" fill="none"/></svg>
<div class="t" style="left:976px;top:324px;font-size:10px;line-height:12.0px;color:#f0f0f0;line-height:12px;font-weight:bold">变换</div>
<svg style="left:1102px;top:325px;" width="11" height="10" viewBox="0 0 11 10"><path d="M3 3.5A4 4 0 1 1 2 7" stroke="#c8c8c8" stroke-width="1.2" fill="none"/><path d="M1 1V4.5H4.5" stroke="#c8c8c8" stroke-width="1.2" fill="none"/><path d="M1 9.5H10" stroke="#c8c8c8" stroke-width="1"/></svg>
<div class="a" style="left:1165px;top:319px;width:12px;height:126px;background:#4c4c4c;"></div>
<svg style="left:1167px;top:324px;" width="8" height="5" viewBox="0 0 8 5"><path d="M0.5 4.5L4 1L7.5 4.5" stroke="#777" stroke-width="1" fill="none"/></svg>
<div class="a" style="left:1166px;top:332px;width:9px;height:23px;background:#626262;"></div>
<svg style="left:1167px;top:436px;" width="8" height="5" viewBox="0 0 8 5"><path d="M0.5 0.5L4 4L7.5 0.5" stroke="#777" stroke-width="1" fill="none"/></svg>
<div class="t" style="left:991px;top:348px;font-size:9.5px;line-height:11.4px;color:#c8c8c8;line-height:11px">W</div>
<div class="a" style="left:1005px;top:346px;width:43px;height:16px;background:#3a3a3a;"></div>
<div class="t" style="left:1007px;top:348px;font-size:9.5px;line-height:11.4px;color:#f0f0f0;line-height:11px">342 像素</div>
<div class="t" style="left:991px;top:371px;font-size:9.5px;line-height:11.4px;color:#c8c8c8;line-height:11px">H</div>
<div class="a" style="left:1005px;top:369px;width:43px;height:15px;background:#3a3a3a;"></div>
<div class="t" style="left:1007px;top:371px;font-size:9.5px;line-height:11.4px;color:#f0f0f0;line-height:11px">280 像素</div>
<div class="t" style="left:1060px;top:348px;font-size:9.5px;line-height:11.4px;color:#7a7a7a;line-height:11px">X</div>
<div class="a" style="left:1071px;top:346px;width:41px;height:16px;background:#4c4c4c;"></div>
<div class="t" style="left:1073px;top:348px;font-size:9.5px;line-height:11.4px;color:#6e6e6e;line-height:11px">46 像素</div>
<div class="t" style="left:1060px;top:371px;font-size:9.5px;line-height:11.4px;color:#7a7a7a;line-height:11px">Y</div>
<div class="a" style="left:1071px;top:369px;width:41px;height:15px;background:#4c4c4c;"></div>
<div class="t" style="left:1073px;top:371px;font-size:9.5px;line-height:11.4px;color:#6e6e6e;line-height:11px">128.06 像</div>
<div class="a" style="left:966px;top:355px;width:18px;height:19px;background:#3a3a3a;"></div>
<svg style="left:971px;top:358px;" width="8" height="13" viewBox="0 0 8 13"><path d="M2.2 5.5A2.5 2.5 0 0 1 1.2 3.5V3A2.3 2.3 0 0 1 6.8 3V3.5A2.5 2.5 0 0 1 5.8 5.5M2.2 7.5A2.5 2.5 0 0 0 1.2 9.5V10A2.3 2.3 0 0 0 6.8 10V9.5A2.5 2.5 0 0 0 5.8 7.5M4 4.5V8.5" stroke="#dcdcdc" stroke-width="1.3" fill="none"/></svg>
<svg style="left:990px;top:393px;" width="11" height="10" viewBox="0 0 11 10"><path d="M0.5 9.5H10.5M0.5 9.5L9 1.5M5 5.5A4 4 0 0 1 6 9.5" stroke="#c8c8c8" stroke-width="1.1" fill="none"/></svg>
<div class="a" style="left:1005px;top:393px;width:32px;height:13px;background:#4c4c4c;"></div>
<div class="t" style="left:1007px;top:394px;font-size:9.5px;line-height:11.4px;color:#6e6e6e;line-height:11px">0.00°</div>
<div class="a" style="left:1039px;top:393px;width:9px;height:13px;background:#4c4c4c;"></div>
<svg style="left:1076px;top:394px;" width="12" height="11" viewBox="0 0 12 11"><path d="M0.6 1.5L4.8 5.5L0.6 9.5Z" stroke="#a0a0a0" stroke-width="1" fill="none"/><path d="M11.4 1.5L7.2 5.5L11.4 9.5Z" fill="#a0a0a0"/><path d="M6 0V11" stroke="#a0a0a0" stroke-width="0.8"/></svg>
<svg style="left:1098px;top:393px;" width="12" height="13" viewBox="0 0 12 13"><path d="M1.5 0.6L6 5L10.5 0.6Z" stroke="#a0a0a0" stroke-width="1" fill="none"/><path d="M1.5 12.4L6 8L10.5 12.4Z" fill="#a0a0a0"/><path d="M0 6.5H12" stroke="#a0a0a0" stroke-width="0.8"/></svg>
<div class="a" style="left:958px;top:416px;width:207px;height:1px;background:#4a4a4a;"></div>
<svg style="left:963px;top:427px;" width="8" height="5" viewBox="0 0 8 5"><path d="M0.5 0.5L4 4L7.5 0.5" stroke="#a8a8a8" stroke-width="1" fill="none"/></svg>
<div class="t" style="left:976px;top:424px;font-size:10px;line-height:12.0px;color:#f0f0f0;line-height:12px;font-weight:bold">字符</div>
<div class="a" style="left:958px;top:445px;width:219px;height:14px;background:#535353;"></div>
<div class="a" style="left:958px;top:459px;width:219px;height:1px;background:#3e3e3e;"></div>
<div class="a" style="left:958px;top:460px;width:219px;height:22px;background:#454545;"></div>
<div class="a" style="left:988px;top:460px;width:31px;height:22px;background:#474747;"></div>
<div class="a" style="left:1019px;top:460px;width:31px;height:22px;background:#474747;"></div>
<div class="a" style="left:958px;top:460px;width:30px;height:22px;background:#535353;"></div>
<div class="t" style="left:965px;top:465px;font-size:9.5px;line-height:11.4px;color:#ececec;line-height:11px">图层</div>
<div class="t" style="left:995px;top:465px;font-size:9.5px;line-height:11.4px;color:#9a9a9a;line-height:11px">通道</div>
<div class="t" style="left:1026px;top:465px;font-size:9.5px;line-height:11.4px;color:#9a9a9a;line-height:11px">路径</div>
<div class="a" style="left:1164px;top:468px;width:8px;height:1px;background:#bdbdbd;"></div>
<div class="a" style="left:1164px;top:470px;width:8px;height:1px;background:#bdbdbd;"></div>
<div class="a" style="left:1164px;top:472px;width:8px;height:1px;background:#bdbdbd;"></div>
<div class="a" style="left:962px;top:490px;width:64px;height:15px;background:#4c4c4c;"></div>
<svg style="left:967px;top:493px;" width="9" height="9" viewBox="0 0 9 9"><circle cx="3.5" cy="3.5" r="2.7" stroke="#9a9a9a" stroke-width="1.2" fill="none"/><path d="M5.5 5.5L8.5 8.5" stroke="#9a9a9a" stroke-width="1.4"/></svg>
<div class="t" style="left:979px;top:492px;font-size:9.5px;line-height:11.4px;color:#7a7a7a;line-height:11px">类型</div>
<svg style="left:1018px;top:496px;" width="6" height="4" viewBox="0 0 6 4"><path d="M0.5 0.5L3 3L5.5 0.5" stroke="#777" stroke-width="1" fill="none"/></svg>
<svg style="left:1039px;top:493px;" width="11" height="10" viewBox="0 0 11 10"><rect x="0.6" y="0.6" width="9.8" height="8.8" stroke="#a8a8a8" stroke-width="1.1" fill="none"/><path d="M2.5 7L4.5 4.5L6 6L7 5L8.5 7Z" fill="#a8a8a8"/></svg>
<svg style="left:1058px;top:493px;" width="10" height="10" viewBox="0 0 10 10"><circle cx="5" cy="5" r="4.3" stroke="#a8a8a8" stroke-width="1.1" fill="none"/><path d="M5 0.7A4.3 4.3 0 0 1 5 9.3Z" fill="#a8a8a8"/></svg>
<div class="t" style="left:1079px;top:491px;font-size:12px;line-height:14.4px;color:#a8a8a8;font-family:'Liberation Serif',serif;font-weight:bold;line-height:13px">T</div>
<svg style="left:1095px;top:493px;" width="11" height="11" viewBox="0 0 11 11"><rect x="1.5" y="1.5" width="8" height="8" stroke="#a8a8a8" stroke-width="1.1" fill="none"/><rect x="0" y="0" width="3" height="3" fill="#a8a8a8"/><rect x="8" y="0" width="3" height="3" fill="#a8a8a8"/><rect x="0" y="8" width="3" height="3" fill="#a8a8a8"/><rect x="8" y="8" width="3" height="3" fill="#a8a8a8"/></svg>
<svg style="left:1114px;top:492px;" width="10" height="12" viewBox="0 0 10 12"><path d="M0.6 4V11.4H9.4V0.6H4Z" stroke="#a8a8a8" stroke-width="1.1" fill="none"/><rect x="2" y="6" width="5" height="5" fill="#a8a8a8"/></svg>
<svg style="left:1134px;top:489px;" width="8" height="14" viewBox="0 0 8 14"><circle cx="4" cy="4" r="3.8" fill="#b8b8b8"/><path d="M4 7V13" stroke="#6a6a6a" stroke-width="1.5"/></svg>
<div class="a" style="left:958px;top:506px;width:219px;height:1px;background:#4a4a4a;"></div>
<div class="a" style="left:962px;top:512px;width:88px;height:15px;background:#3c3c3c;"></div>
<div class="t" style="left:968px;top:513px;font-size:10px;line-height:12.0px;color:#f0f0f0;line-height:12px">正常</div>
<svg style="left:1042px;top:517px;" width="7" height="5" viewBox="0 0 7 5"><path d="M0.5 0.5L3.5 3.5L6.5 0.5" stroke="#b8b8b8" stroke-width="1.1" fill="none"/></svg>
<div class="t" style="left:1056px;top:513px;font-size:9.5px;line-height:11.4px;color:#d8d8d8;line-height:12px">不透明度:</div>
<div class="a" style="left:1100px;top:513px;width:29px;height:14px;background:#3c3c3c;"></div>
<div class="t" style="left:1102px;top:514px;font-size:9.5px;line-height:11.4px;color:#ececec;line-height:12px;letter-spacing:-0.3px">100%</div>
<div class="a" style="left:1130px;top:513px;width:11px;height:14px;background:#474747;"></div>
<svg style="left:1132px;top:518px;" width="7" height="5" viewBox="0 0 7 5"><path d="M0.5 0.5L3.5 3.5L6.5 0.5" stroke="#b8b8b8" stroke-width="1.1" fill="none"/></svg>
<div class="a" style="left:958px;top:530px;width:219px;height:1px;background:#4a4a4a;"></div>
<div class="t" style="left:964px;top:535px;font-size:9.5px;line-height:11.4px;color:#7e7e7e;line-height:12px">锁定:</div>
<svg style="left:991px;top:535px;" width="10" height="10" viewBox="0 0 10 10"><rect x="0.5" y="0.5" width="9" height="9" stroke="#a8a8a8" stroke-width="1" fill="none"/><rect x="2" y="2" width="2" height="2" fill="#a8a8a8"/><rect x="6" y="2" width="2" height="2" fill="#a8a8a8"/><rect x="4" y="4" width="2" height="2" fill="#a8a8a8"/><rect x="2" y="6" width="2" height="2" fill="#a8a8a8"/><rect x="6" y="6" width="2" height="2" fill="#a8a8a8"/></svg>
<svg style="left:1009px;top:534px;" width="10" height="12" viewBox="0 0 10 12"><path d="M9.5 0.5L4 7L5 8L10 1.5Z" fill="#a8a8a8"/><path d="M3.5 7.5C2 8 2 10.5 0.5 11.5C3 11.5 5 10.5 4.8 8.5Z" fill="#a8a8a8"/></svg>
<svg style="left:1025px;top:534px;" width="11" height="11" viewBox="0 0 11 11"><path d="M5.5 0.5V10.5M0.5 5.5H10.5" stroke="#a8a8a8" stroke-width="1.2"/><path d="M5.5 0L3.8 2H7.2ZM5.5 11L3.8 9H7.2ZM0 5.5L2 3.8V7.2ZM11 5.5L9 3.8V7.2Z" fill="#a8a8a8"/></svg>
<svg style="left:1042px;top:534px;" width="11" height="11" viewBox="0 0 11 11"><path d="M2.5 0V8.5H11M0 2.5H8.5V11" stroke="#a8a8a8" stroke-width="1.1" fill="none"/></svg>
<svg style="left:1060px;top:534px;" width="9" height="11" viewBox="0 0 9 11"><path d="M2 5V3A2.5 2.5 0 0 1 7 3V5" stroke="#a0a0a0" stroke-width="1.2" fill="none"/><rect x="0.5" y="5" width="8" height="6" fill="#a0a0a0"/></svg>
<div class="t" style="left:1075px;top:535px;font-size:9.5px;line-height:11.4px;color:#d8d8d8;line-height:12px">填充:</div>
<div class="a" style="left:1100px;top:534px;width:29px;height:13px;background:#3c3c3c;"></div>
<div class="t" style="left:1102px;top:535px;font-size:9.5px;line-height:11.4px;color:#ececec;line-height:12px;letter-spacing:-0.3px">100%</div>
<div class="a" style="left:1130px;top:534px;width:11px;height:13px;background:#474747;"></div>
<svg style="left:1132px;top:539px;" width="7" height="5" viewBox="0 0 7 5"><path d="M0.5 0.5L3.5 3.5L6.5 0.5" stroke="#b8b8b8" stroke-width="1.1" fill="none"/></svg>
<div class="a" style="left:958px;top:551px;width:219px;height:1px;background:#4a4a4a;"></div>
<div class="a" style="left:958px;top:552px;width:219px;height:123px;background:#4a4a4a;"></div>
<div class="a" style="left:958px;top:553px;width:25px;height:31px;background:#4f4f4f;"></div>
<div class="a" style="left:983px;top:553px;width:181px;height:31px;background:#6a6a6a;"></div>
<svg style="left:963px;top:565px;" width="12" height="8" viewBox="0 0 12 8"><path d="M0.5 4C2.5 0.8 9.5 0.8 11.5 4C9.5 7.2 2.5 7.2 0.5 4Z" fill="#dcdcdc"/><circle cx="6" cy="4" r="1.8" fill="#4a4a4a"/></svg>
<svg style="left:983px;top:555px;" width="29" height="28" viewBox="0 0 29 28"><path d="M0.5 6V0.5H6M23 0.5H28.5V6M28.5 22V27.5H23M6 27.5H0.5V22" stroke="#e0e0e0" stroke-width="1.1" fill="none"/></svg>
<div class="t" style="left:991px;top:559px;font-size:20px;line-height:24.0px;color:#e0e0e0;font-family:'Liberation Serif',serif;line-height:22px">T</div>
<div class="t" style="left:1016px;top:563px;font-size:9.5px;line-height:11.4px;color:#f0f0f0;line-height:11px">图层 1</div>
<div class="a" style="left:958px;top:584px;width:206px;height:31px;background:#4f4f4f;"></div>
<svg style="left:963px;top:597px;" width="12" height="8" viewBox="0 0 12 8"><path d="M0.5 4C2.5 0.8 9.5 0.8 11.5 4C9.5 7.2 2.5 7.2 0.5 4Z" fill="#dcdcdc"/><circle cx="6" cy="4" r="1.8" fill="#4e4e4e"/></svg>
<div class="a" style="left:985px;top:589px;width:16px;height:23px;background:#fafafa;"></div>
<div class="t" style="left:1009px;top:595px;font-size:9.5px;line-height:11.4px;color:#f0f0f0;line-height:11px">背景</div>
<svg style="left:1143px;top:595px;" width="9" height="11" viewBox="0 0 9 11"><path d="M2 5V3A2.5 2.5 0 0 1 7 3V5" stroke="#d0d0d0" stroke-width="1.2" fill="none"/><rect x="0.9" y="5.2" width="7.2" height="5.3" stroke="#d0d0d0" stroke-width="1.1" fill="none"/><rect x="3.8" y="7" width="1.4" height="2" fill="#d0d0d0"/></svg>
<div class="a" style="left:1164px;top:553px;width:13px;height:122px;background:#4d4d4d;"></div>
</body></html>
